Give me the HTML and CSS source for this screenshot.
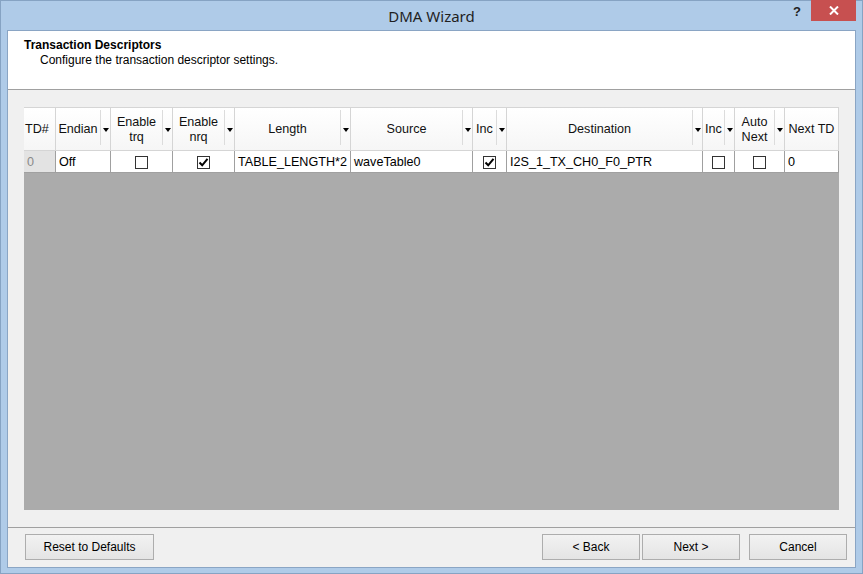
FILE: index.html
```html
<!DOCTYPE html>
<html>
<head>
<meta charset="utf-8">
<link rel="stylesheet" href="styles.css">
</head>
<body>
<div class="window">
  <div class="titlebar">
    <div class="tb-side"></div>
    <div class="title">DMA Wizard</div>
    <div class="tb-side tb-right">
      <span class="help">?</span>
      <span class="close"><svg width="10" height="9" viewBox="0 0 10 9"><path d="M1 0.5 L9 8.5 M9 0.5 L1 8.5" stroke="#fff" stroke-width="2"/></svg></span>
    </div>
  </div>
  <div class="client">
    <div class="banner">
      <div class="banner-title">Transaction Descriptors</div>
      <div class="banner-sub">Configure the transaction descriptor settings.</div>
    </div>
    <div class="content">
      <div class="grid">
        <div class="hc plain left">TD#</div>
        <div class="hc"><span class="lbl">Endian</span><span class="div"></span><span class="arr"></span></div>
        <div class="hc"><span class="lbl">Enable<br>trq</span><span class="div"></span><span class="arr"></span></div>
        <div class="hc"><span class="lbl">Enable<br>nrq</span><span class="div"></span><span class="arr"></span></div>
        <div class="hc"><span class="lbl">Length</span><span class="div"></span><span class="arr"></span></div>
        <div class="hc"><span class="lbl">Source</span><span class="div"></span><span class="arr"></span></div>
        <div class="hc"><span class="lbl">Inc</span><span class="div"></span><span class="arr"></span></div>
        <div class="hc"><span class="lbl">Destination</span><span class="div"></span><span class="arr"></span></div>
        <div class="hc"><span class="lbl">Inc</span><span class="div"></span><span class="arr"></span></div>
        <div class="hc"><span class="lbl">Auto<br>Next</span><span class="div"></span><span class="arr"></span></div>
        <div class="hc plain">Next TD</div>

        <div class="dc rowhead">0</div>
        <div class="dc">Off</div>
        <div class="dc center"><span class="cb"></span></div>
        <div class="dc center"><span class="cb checked"><svg width="11" height="11" viewBox="0 0 11 11"><path d="M1.5 5.5 L4.2 8.3 L9.5 1.8" fill="none" stroke="#000" stroke-width="2"/></svg></span></div>
        <div class="dc">TABLE_LENGTH*2</div>
        <div class="dc">waveTable0</div>
        <div class="dc center"><span class="cb checked"><svg width="11" height="11" viewBox="0 0 11 11"><path d="M1.5 5.5 L4.2 8.3 L9.5 1.8" fill="none" stroke="#000" stroke-width="2"/></svg></span></div>
        <div class="dc">I2S_1_TX_CH0_F0_PTR</div>
        <div class="dc center"><span class="cb"></span></div>
        <div class="dc center"><span class="cb"></span></div>
        <div class="dc">0</div>
      </div>
    </div>
    <div class="footer">
      <button class="btn reset">Reset to Defaults</button>
      <div class="spacer"></div>
      <button class="btn">&lt; Back</button>
      <button class="btn next">Next &gt;</button>
      <button class="btn cancel">Cancel</button>
    </div>
  </div>
</div>
</body>
</html>
```

FILE: styles.css
```css
* { box-sizing: border-box; }
html, body { margin: 0; padding: 0; }
body {
  width: 863px;
  height: 574px;
  overflow: hidden;
  font-family: "Liberation Sans", Arial, sans-serif;
  font-size: 12px;
  color: #000;
}
.window {
  width: 863px;
  height: 574px;
  background: #afcbe8;
  box-shadow: inset 0 0 0 1px #86a3c3;
  padding: 0 7px 6px 7px;
  display: flex;
  flex-direction: column;
}
.titlebar {
  height: 30px;
  display: grid;
  grid-template-columns: 1fr auto 1fr;
  align-items: start;
}
.title {
  font-family: "Noto Sans", sans-serif;
  font-size: 15px;
  color: #1f1f1f;
  line-height: 20px;
  padding-top: 6px;
}
.tb-right {
  display: flex;
  justify-content: flex-end;
  align-items: flex-start;
}
.help {
  font-family: "Liberation Sans", sans-serif;
  font-weight: bold;
  font-size: 13px;
  color: #222;
  line-height: 14px;
  margin-top: 5px;
  margin-right: 10px;
}
.close {
  width: 45px;
  height: 21px;
  background: #c75050;
  display: flex;
  align-items: center;
  justify-content: center;
}
.client {
  height: 538px;
  border: 1px solid #8aa5c4;
  background: #f0f0f0;
  display: flex;
  flex-direction: column;
}
.banner {
  height: 59px;
  background: #fff;
  border-bottom: 1px solid #a0a0a0;
  padding: 7px 16px 0 16px;
}
.banner-title {
  font-weight: bold;
  line-height: 14px;
}
.banner-sub {
  padding-left: 16px;
  line-height: 14px;
  margin-top: 1px;
}
.content {
  height: 437px;
  padding: 17px 15px 0 16px;
}
.grid {
  width: 815px;
  height: 403px;
  background: #ababab;
  display: grid;
  grid-template-columns: 32px 55px 62px 62px 116px 122px 34px 196px 32px 50px 54px;
  grid-template-rows: 44px 22px;
  align-content: start;
  font-size: 12.6px;
}
.hc {
  display: flex;
  align-items: stretch;
  background: linear-gradient(#ffffff, #f6f6f6);
  border-top: 1px solid #d5d5d5;
  border-bottom: 1px solid #d5d5d5;
  border-right: 1px solid #d5d5d5;
  color: #111;
  line-height: 15px;
  padding-top: 1px;
}
.hc .lbl {
  flex: 1;
  display: flex;
  align-items: center;
  justify-content: center;
  text-align: center;
  white-space: nowrap;
}
.hc .div {
  width: 1px;
  margin: 1px 0 5px;
  background: #dcdcdc;
}
.hc .arr {
  width: 9px;
  display: flex;
  align-items: center;
  justify-content: center;
}
.hc .arr::before {
  content: "";
  border-left: 3px solid transparent;
  border-right: 3px solid transparent;
  border-top: 4px solid #000;
}
.hc.plain {
  align-items: center;
  justify-content: center;
  white-space: nowrap;
}
.hc.left { justify-content: flex-start; padding-left: 1px; }
.dc {
  background: #fff;
  border-right: 1px solid #a0a0a0;
  border-bottom: 1px solid #a0a0a0;
  display: flex;
  align-items: center;
  padding-left: 3px;
  padding-top: 1px;
  white-space: nowrap;
}
.dc.rowhead {
  background: #e3e3e3;
  color: #8a8a8a;
}
.dc.center {
  justify-content: center;
  padding-left: 0;
}
.cb {
  width: 13px;
  height: 13px;
  border: 1px solid #333;
  background: #fff;
  display: flex;
  align-items: center;
  justify-content: center;
}
.footer {
  flex: 1;
  border-top: 1px solid #a0a0a0;
  display: flex;
  align-items: flex-start;
  padding: 6px 8px 0 17px;
}
.spacer { flex: 1; }
.btn {
  height: 26px;
  width: 98px;
  border: 1px solid #adadad;
  background: linear-gradient(#f2f2f2, #e4e4e4);
  font-family: "Liberation Sans", Arial, sans-serif;
  font-size: 12px;
  color: #000;
  padding: 0;
  margin: 0;
}
.btn.reset { width: 129px; }
.btn.next { margin-left: 2px; }
.btn.cancel { margin-left: 9px; }
```
